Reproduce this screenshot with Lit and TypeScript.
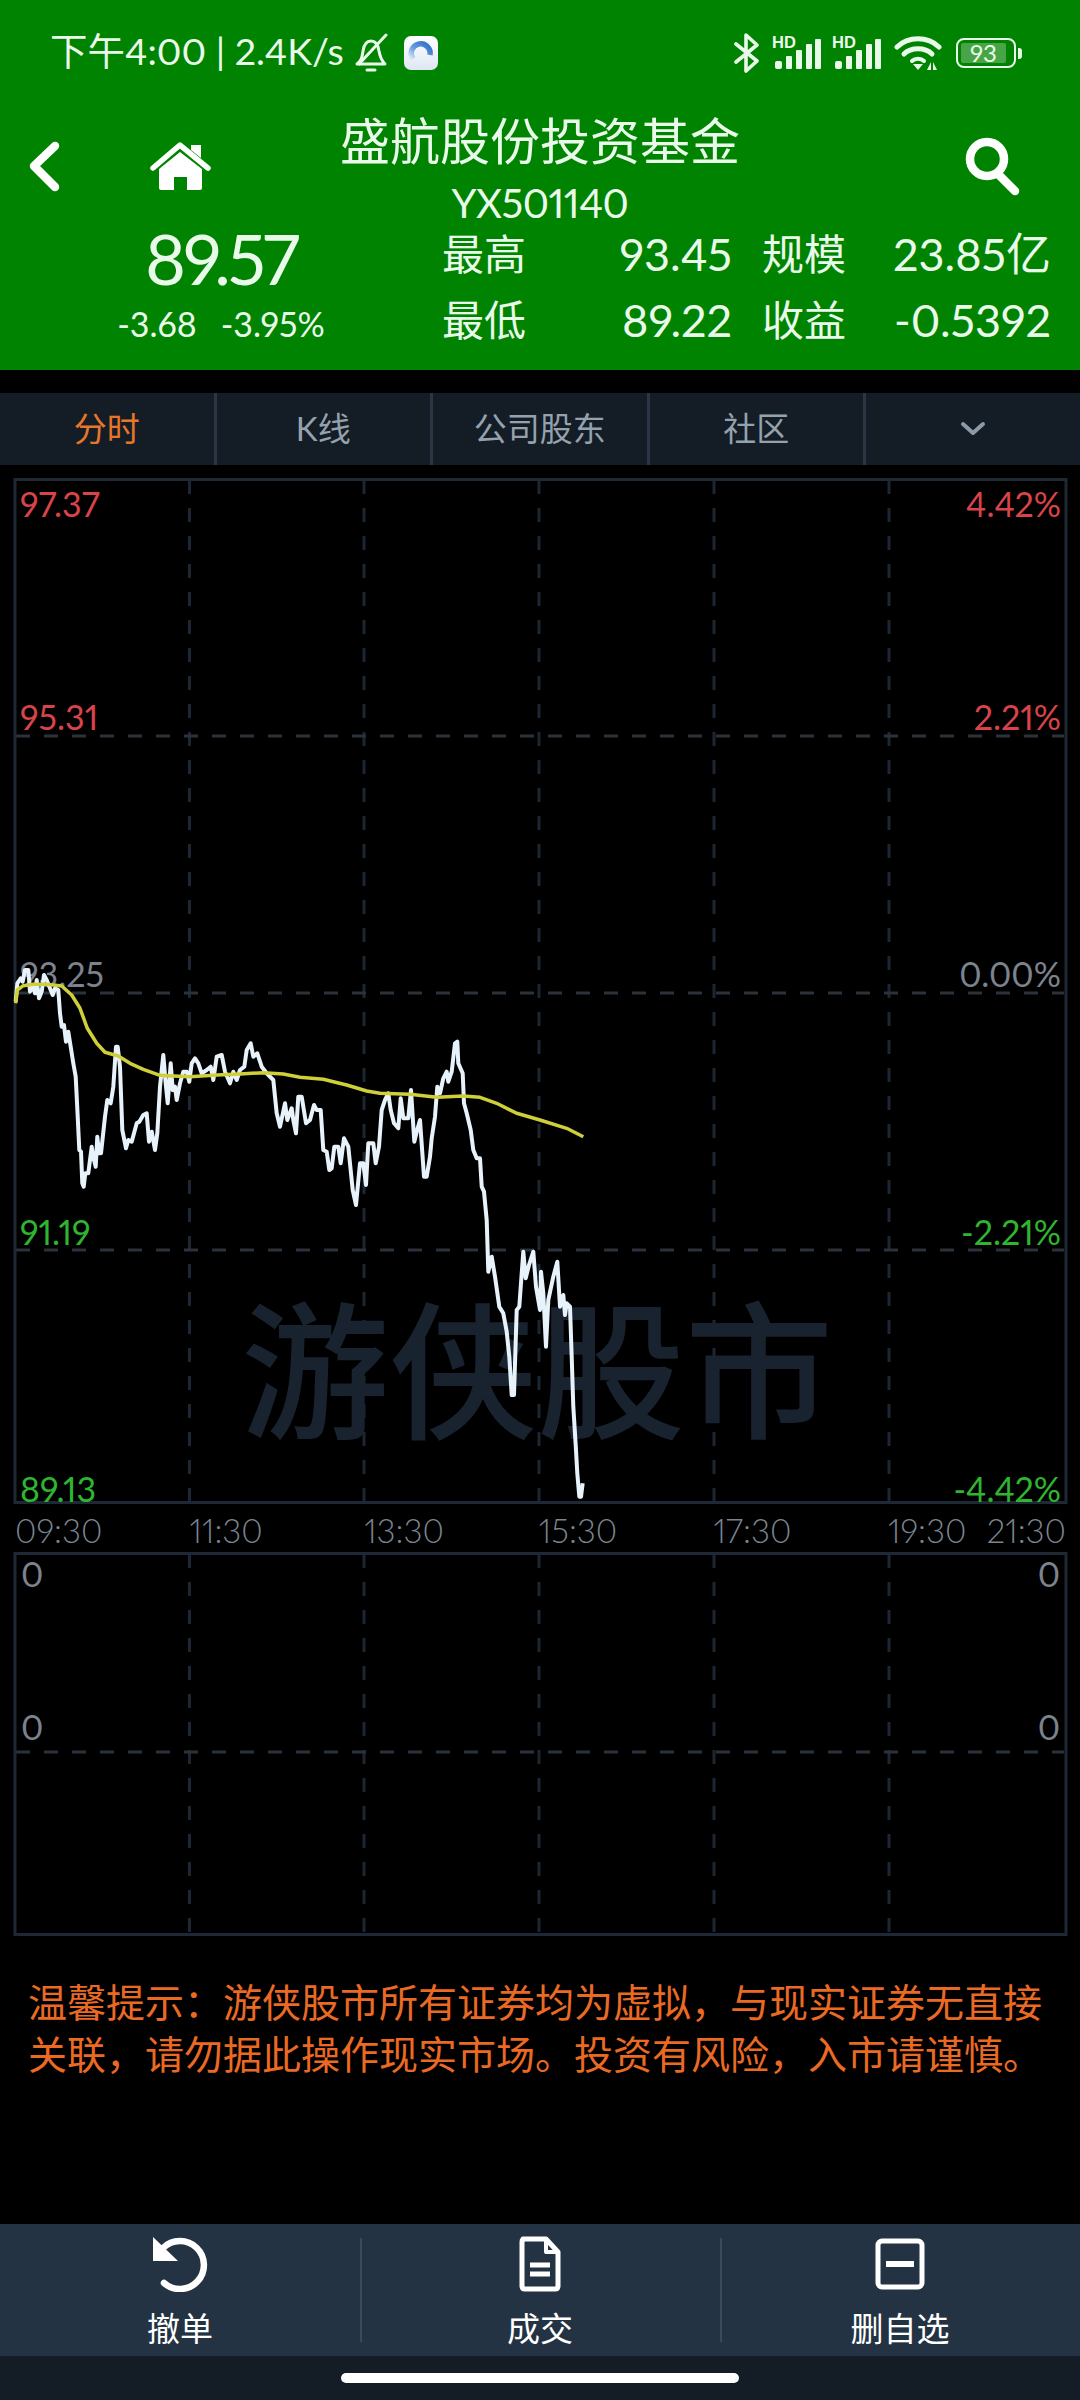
import { LitElement, css, html, svg } from 'lit'
import { customElement } from 'lit/decorators.js'

type Pt = [number, number]

// traced from the reference crops, each crop is 3x of the full image
const crop = (ox: number, oy: number, pts: Pt[]): Pt[] =>
  pts.map(([x, y]) => [ox + x / 3, oy + y / 3] as Pt)

const priceLine: Pt[] = [
  ...crop(0, 950, [[47,155],[52,100],[62,85],[68,95],[75,60],[85,60],[90,125],[97,105],[105,130],[110,90],[117,145],[125,125],[132,75],[140,90],[150,115],[158,135],[165,115],[175,120],[180,190],[185,230],[192,225],[198,275],[205,245],[212,290],[220,340],[227,380],[233,500],[238,600],[243,605],[247,700],[251,710],[256,670],[265,670],[275,590],[280,620],[287,650],[292,560],[297,610],[303,610],[315,500],[322,450],[332,460],[340,410],[348,290],[353,290],[360,350],[367,540],[378,595],[385,570],[395,575],[410,520],[418,515],[430,495],[440,490],[447,575],[455,545],[465,600],[472,550],[480,410],[490,315],[497,400],[503,460],[512,340],[518,420],[525,410],[530,450],[540,400],[550,365],[560,365],[568,395],[575,340],[585,325],[595,340],[605,370],[620,360],[632,350],[640,390],[650,320],[665,315],[675,365],[690,400],[700,365],[710,390],[720,360],[733,350],[740,300],[752,280],[760,320],[772,310],[785,350],[800,370],[820,390],[830,490],[840,530],[855,460],[862,510],[875,475],[880,510],[888,550],[895,440]]),
  ...crop(280, 950, [[65,440],[78,520],[90,510],[102,465],[110,480],[122,480],[130,600],[140,605],[148,660],[155,655],[163,590],[175,590],[182,640],[192,565],[205,590],[218,720],[228,765],[240,640],[250,640],[258,705],[265,580],[280,580],[287,640],[297,590],[305,480],[315,450],[325,430],[332,480],[342,520],[355,535],[362,445],[370,505],[385,505],[393,420],[403,575],[410,545],[420,510],[432,680],[440,680],[450,620],[455,565],[465,500],[472,410],[480,430],[490,385],[500,365],[505,395],[515,365],[525,280],[532,275],[535,340],[548,370],[552,460],[560,490],[572,540],[580,600],[590,625],[600,625],[605,710],[612,725]]),
  ...crop(460, 1190, [[80,90],[85,245],[95,200],[105,260],[118,350],[130,370],[140,425],[148,500],[155,615],[162,615],[170,360],[178,350],[185,250],[190,185],[197,265],[207,225],[220,185],[228,290],[240,360],[243,245],[250,310],[258,470],[265,330],[280,260],[292,215],[300,350],[310,315],[315,375],[320,340],[330,350],[335,500],[340,650],[347,765],[352,850],[358,920],[363,920],[368,880]]),
]

const avgLine: Pt[] = [
  ...crop(0, 950, [[47,160],[52,120],[70,107],[100,103],[140,103],[185,108],[215,135],[240,175],[262,235],[290,280],[315,307],[355,318],[390,340],[430,358],[480,376],[520,378],[570,380],[650,375],[720,372],[790,368],[850,372]]),
  ...crop(280, 950, [[60,382],[130,388],[200,405],[260,423],[300,430],[390,433],[470,442],[550,438],[600,442],[650,460],[710,490],[780,510],[860,535],[910,560]]),
]

const toPoints = (pts: Pt[]) => pts.map(([x, y]) => `${x.toFixed(1)},${y.toFixed(1)}`).join(' ')

const gridX = [189.5, 364, 539, 714, 889]

const axis = [
  { y: 517, left: '97.37', right: '4.42%', cls: 'up' },
  { y: 730, left: '95.31', right: '2.21%', cls: 'up' },
  { y: 987, left: '93.25', right: '0.00%', cls: 'flat' },
  { y: 1245, left: '91.19', right: '-2.21%', cls: 'down' },
  { y: 1502, left: '89.13', right: '-4.42%', cls: 'down' },
]

const times = ['09:30', '11:30', '13:30', '15:30', '17:30', '19:30', '21:30']
const tabs = ['分时', 'K线', '公司股东', '社区']

const signal = () => html`
  <svg class="signal" width="50" height="44" viewBox="0 -4 50 44">
    <text x="0" y="13" class="hd">HD</text>
    <rect x="3" y="26" width="7" height="8" rx="2"></rect>
    <rect x="14" y="21" width="6" height="13" rx="1"></rect>
    <rect x="24" y="15" width="6" height="19" rx="1"></rect>
    <rect x="34" y="9" width="6" height="25" rx="1"></rect>
    <rect x="43" y="4" width="6" height="30" rx="1"></rect>
  </svg>
`

@customElement('app-root')
export class AppRoot extends LitElement {
  render() {
    return html`
      <header class="hdr">
        <div class="status">
          <span class="clock">下午4:00 | 2.4K/s</span>
          <svg class="bell" width="34" height="40" viewBox="0 0 34 40" fill="none" stroke="currentColor" stroke-width="3" stroke-linecap="round" stroke-linejoin="round">
            <path d="M3 31 C8 27 8 24 9 18 C10 11 13 8 17 8 C21 8 24 11 25 18 C26 24 27 27 31 31 Z"></path>
            <path d="M13 37 H21"></path>
            <path d="M5 31 L32 2"></path>
          </svg>
          <svg class="app" width="34" height="34" viewBox="0 0 34 34">
            <defs>
              <linearGradient id="ap" x1="0" y1="0" x2="0" y2="1">
                <stop offset="0" stop-color="#ffffff"></stop>
                <stop offset="1" stop-color="#dfe6f3"></stop>
              </linearGradient>
              <linearGradient id="arc" x1="1" y1="0" x2="0" y2="1">
                <stop offset="0" stop-color="#2f6cc4"></stop>
                <stop offset=".6" stop-color="#6aa2e0"></stop>
                <stop offset="1" stop-color="#dbe8f7"></stop>
              </linearGradient>
            </defs>
            <rect width="34" height="34" rx="7" fill="url(#ap)"></rect>
            <path d="M9 23 A9.5 9.5 0 1 1 26 19" fill="none" stroke="url(#arc)" stroke-width="5.5"></path>
          </svg>
          <span class="spacer"></span>
          <svg class="bt" width="26" height="40" viewBox="0 0 26 40" fill="none" stroke="currentColor" stroke-width="3.6" stroke-linejoin="round" stroke-linecap="round">
            <path d="M2 11 L23 28 L12 38 V2 L23 12 L2 29"></path>
          </svg>
          ${signal()} ${signal()}
          <svg class="wifi" width="48" height="36" viewBox="0 0 48 36" fill="none" stroke="currentColor" stroke-width="5" stroke-linecap="round">
            <path d="M3 12 C14 1 34 1 45 12"></path>
            <path d="M10 19 C17 12 31 12 38 19"></path>
            <path d="M18 26 C21 23 27 23 30 26" stroke-width="4"></path>
            <path d="M19 29 L24 35 L29 29 Z" fill="currentColor" stroke="none"></path>
            <path d="M37 27 V35 H33 Z M39 27 V35 H43 Z" fill="currentColor" stroke="none"></path>
          </svg>
          <div class="batt">
            <span class="level">93</span>
          </div>
          <i class="nub"></i>
        </div>

        <div class="nav">
          <div class="nav-left">
            <svg width="34" height="52" viewBox="0 0 34 52" fill="none" stroke="currentColor" stroke-width="8.5" stroke-linecap="round" stroke-linejoin="round">
              <path d="M27 5 L6 25 L27 46"></path>
            </svg>
            <svg class="home" width="62" height="50" viewBox="0 0 62 50" fill="#fff">
              <path d="M9 48 V27 L30 10 L52 27 V46 Q52 48 50 48 H37 V35 H24 V48 H11 Q9 48 9 46 Z"></path>
              <path d="M3 26 L30 3 L58 26" fill="none" stroke="#fff" stroke-width="5.5" stroke-linecap="round" stroke-linejoin="round"></path>
              <path d="M41 3 H51 V16 L41 8 Z"></path>
            </svg>
          </div>
          <div class="title">
            <div class="name">盛航股份投资基金</div>
            <div class="code">YX501140</div>
          </div>
          <svg class="search" width="58" height="62" viewBox="0 0 58 62" fill="none" stroke="#fff" stroke-width="8.5" stroke-linecap="round">
            <circle cx="25" cy="24" r="17"></circle>
            <path d="M37 40 L53 56"></path>
          </svg>
        </div>

        <div class="quote">
          <div class="price">
            <div class="last">89.57</div>
            <div class="change"><span>-3.68</span><span>-3.95%</span></div>
          </div>
          <div class="stats">
            <span class="k">最高</span><span class="v">93.45</span><span class="k">规模</span><span class="v">23.85亿</span>
            <span class="k">最低</span><span class="v">89.22</span><span class="k">收益</span><span class="v">-0.5392</span>
          </div>
        </div>
      </header>

      <nav class="tabs">
        ${tabs.map((t, i) => html`<div class="tab ${i === 0 ? 'on' : ''}">${t}</div>`)}
        <div class="tab">
          <svg width="26" height="16" viewBox="0 0 26 16" fill="none" stroke="#8c9aa8" stroke-width="4" stroke-linecap="round" stroke-linejoin="round">
            <path d="M3 3 L13 12 L23 3"></path>
          </svg>
        </div>
      </nav>

      ${this.priceChart()}

      <div class="times">${times.map((t) => html`<span>${t}</span>`)}</div>

      ${this.volumeChart()}

      <p class="notice">温馨提示：游侠股市所有证券均为虚拟，与现实证券无直接<br />关联，请勿据此操作现实市场。投资有风险，入市请谨慎。</p>

      <div class="actions">
        <div class="act">
          <svg width="58" height="56" viewBox="0 0 58 56" fill="none" stroke="#fff" stroke-width="6.5">
            <path d="M12 12 A24 24 0 1 1 13 47" stroke-linecap="round"></path>
            <path d="M2 1 V25 H27 Z" fill="#fff" stroke="none"></path>
          </svg>
          <span>撤单</span>
        </div>
        <div class="act">
          <svg width="42" height="56" viewBox="0 0 42 56" fill="none" stroke="#fff" stroke-width="5" stroke-linejoin="round">
            <path d="M4 3 H27 L39 16 V50 Q39 53 36 53 H6 Q3 53 3 50 V6 Q3 3 6 3 Z"></path>
            <path d="M27 3 V16 H39" stroke-width="4"></path>
            <path d="M11 29 H31 M11 38 H31" stroke-width="5"></path>
          </svg>
          <span>成交</span>
        </div>
        <div class="act">
          <svg width="50" height="56" viewBox="0 0 50 56" fill="none" stroke="#fff" stroke-width="5">
            <rect x="3" y="5" width="44" height="46" rx="4"></rect>
            <path d="M11 28 H39" stroke-width="6"></path>
          </svg>
          <span>删自选</span>
        </div>
      </div>
      <footer class="gesture"><i></i></footer>
    `
  }

  // svg coordinates are the page coordinates shifted up by the chart's top
  private priceChart() {
    const top = 478
    const h = 1034
    return html`
      <svg class="chart main" width="1080" height=${h} viewBox="0 ${top} 1080 ${h}">
        <g class="grid">
          ${gridX.map((x) => svg`<line x1=${x} x2=${x} y1="480" y2="1503"></line>`)}
          ${[736, 993, 1250].map((y) => svg`<line class="h" x1="16" x2="1064" y1=${y} y2=${y}></line>`)}
          <rect class="frame" x="15" y="479.5" width="1051" height="1023"></rect>
        </g>
        <text class="mark" x="537" y="1427">游侠股市</text>
        ${axis.map((a) => svg`
          <text class="ax ${a.cls}" x="20" y=${a.y}>${a.left}</text>
          <text class="ax end ${a.cls}" x="1061" y=${a.y}>${a.right}</text>
        `)}
        <polyline class="price-line" points=${toPoints(priceLine)}></polyline>
        <polyline class="avg-line" points=${toPoints(avgLine)}></polyline>
      </svg>
    `
  }

  private volumeChart() {
    const top = 1552
    const h = 385
    return html`
      <svg class="chart vol" width="1080" height=${h} viewBox="0 ${top} 1080 ${h}">
        <g class="grid">
          ${gridX.map((x) => svg`<line x1=${x} x2=${x} y1="1554" y2="1935"></line>`)}
          <line class="h" x1="16" x2="1064" y1="1752" y2="1752"></line>
          <rect class="frame" x="15" y="1553.5" width="1051" height="381"></rect>
        </g>
        <text class="ax flat" x="21" y="1587">0</text>
        <text class="ax end flat" x="1060" y="1587">0</text>
        <text class="ax flat" x="21" y="1740">0</text>
        <text class="ax end flat" x="1060" y="1740">0</text>
      </svg>
    `
  }

  static styles = css`
    :host {
      display: flex;
      flex-direction: column;
      width: 1080px;
      height: 2400px;
      background: #000;
      overflow: hidden;
      font-family: 'Lato', 'Noto Sans CJK SC', sans-serif;
      font-variant-numeric: proportional-nums;
    }

    .hdr {
      flex: none;
      height: 370px;
      background: #008300;
      color: #eafaea;
      box-sizing: border-box;
    }

    .status {
      display: flex;
      align-items: center;
      height: 106px;
      padding: 0 58px 0 50px;
      box-sizing: border-box;
    }

    .clock {
      margin-bottom: 10px;
      font-size: 37.5px;
      white-space: nowrap;
    }

    .bell {
      margin-left: 10px;
    }

    .app {
      margin-left: 16px;
    }

    .spacer {
      flex: 1;
    }

    .bt {
      margin-right: 2px;
    }

    .signal {
      margin-left: 10px;
      fill: currentColor;
    }

    .hd {
      font: 700 16.5px 'Liberation Sans', sans-serif;
    }

    .wifi {
      margin-left: 12px;
    }

    .batt {
      display: flex;
      margin-left: 14px;
      width: 60px;
      height: 30px;
      padding: 3px;
      box-sizing: border-box;
      border: 2.5px solid currentColor;
      border-radius: 8px;
    }

    .level {
      flex: 1;
      margin-right: 5px;
      background: rgba(255, 255, 255, 0.28);
      border-radius: 2px;
      font-size: 24px;
      line-height: 19px;
      text-align: center;
    }

    .nub {
      width: 4px;
      height: 11px;
      margin-left: 2px;
      background: currentColor;
      border-radius: 0 3px 3px 0;
    }

    .nav {
      display: grid;
      grid-template-columns: 1fr auto 1fr;
      align-items: center;
      height: 121px;
      padding: 0 60px;
    }

    .nav-left {
      display: flex;
      align-items: center;
      margin: -5px 0 0 -32px;
      color: #fff;
    }

    .home {
      margin-left: 88px;
    }

    .title {
      align-self: start;
      padding-top: 2px;
      text-align: center;
    }

    .name {
      font-size: 50px;
      line-height: 66px;
    }

    .code {
      font-size: 40px;
      line-height: 58px;
      letter-spacing: -0.5px;
    }

    .search {
      justify-self: end;
      margin-bottom: 7px;
    }

    .quote {
      display: flex;
      height: 143px;
    }

    .price {
      width: 442px;
      flex: none;
      margin-top: -12px;
      text-align: center;
    }

    .last {
      font-size: 70px;
      line-height: 86px;
      letter-spacing: -3px;
    }

    .change {
      display: flex;
      justify-content: center;
      gap: 24px;
      margin-top: 3px;
      font-size: 34px;
      line-height: 40px;
    }

    .stats {
      display: grid;
      grid-template-columns: 84px 206px 115px 204px;
      grid-auto-rows: 66px;
      margin-top: -6px;
      font-size: 45px;
      line-height: 66px;
      white-space: nowrap;
    }

    .k {
      font-size: 42px;
    }

    .k:nth-child(3),
    .k:nth-child(7) {
      margin-left: 30px;
    }

    .v {
      text-align: right;
    }

    .tabs {
      display: flex;
      flex: none;
      height: 72px;
      margin: 23px 0 13px;
      background: #141c26;
    }

    .tab {
      display: flex;
      align-items: center;
      justify-content: center;
      width: 216.5px;
      padding-bottom: 4px;
      box-sizing: border-box;
      border-right: 3px solid #2a3644;
      font-size: 33px;
      color: #94a2ae;
    }

    .tab:last-child {
      border-right: 0;
      width: auto;
      flex: 1;
      padding-bottom: 0;
    }

    .tab.on {
      color: #e8762a;
    }

    .chart {
      display: block;
      flex: none;
    }

    .grid line {
      stroke: #1d2733;
      stroke-width: 3;
      stroke-dasharray: 14 14;
    }

    .grid line.h {
      stroke: #2b323c;
    }

    .frame {
      fill: none;
      stroke: #1f2935;
      stroke-width: 3;
    }

    .mark {
      font-size: 148px;
      font-weight: 500;
      text-anchor: middle;
      fill: #19232f;
    }

    .ax {
      font-size: 34px;
    }

    .ax.end {
      text-anchor: end;
    }

    .up {
      fill: #d9434a;
    }

    .down {
      fill: #2fb52f;
    }

    .flat {
      fill: #7c838c;
    }

    .price-line,
    .avg-line {
      fill: none;
      stroke-linejoin: round;
    }

    .price-line {
      stroke: #e8f2fb;
      stroke-width: 4;
    }

    .avg-line {
      stroke: #cfcf3a;
      stroke-width: 3.5;
    }

    .times {
      display: grid;
      grid-template-columns: repeat(5, 174.6px) 1fr auto;
      flex: none;
      height: 40px;
      padding: 0 14px 0 15px;
      font-size: 33px;
      font-weight: 300;
      line-height: 37px;
      color: #7a8590;
    }

    .notice {
      flex: 1;
      margin: 39px 0 0;
      padding-left: 28px;
      font-size: 39px;
      line-height: 52px;
      color: #ea6a24;
      white-space: nowrap;
    }

    .actions {
      display: flex;
      flex: none;
      height: 132px;
      background: #233343;
    }

    .act {
      display: flex;
      flex-direction: column;
      align-items: center;
      flex: 1;
      padding-top: 12px;
      box-sizing: border-box;
      color: #fff;
      font-size: 33px;
      line-height: 44px;
      position: relative;
    }

    .act span {
      margin-top: 14px;
    }

    .act + .act::before {
      content: '';
      position: absolute;
      left: 0;
      top: 14px;
      bottom: 14px;
      width: 2px;
      background: #3a4a5a;
    }

    .gesture {
      display: flex;
      justify-content: center;
      flex: none;
      height: 44px;
      padding-top: 17px;
      box-sizing: border-box;
      background: #141c26;
    }

    .gesture i {
      width: 398px;
      height: 10px;
      background: #fff;
      border-radius: 5px;
    }
  `
}

declare global {
  interface HTMLElementTagNameMap {
    'app-root': AppRoot
  }
}
